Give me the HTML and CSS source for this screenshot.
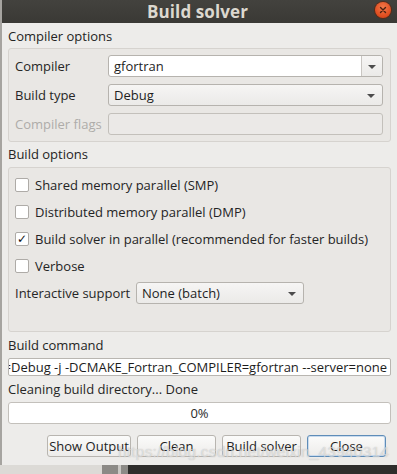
FILE: index.html
```html
<!DOCTYPE html>
<html>
<head>
<meta charset="utf-8">
<link rel="stylesheet" href="styles.css">
</head>
<body>
<div class="window">
  <div class="titlebar">
    <span class="title">Build solver</span>
    <span class="close-btn">
      <svg width="16" height="16" viewBox="0 0 16 16"><path d="M5.5 5.5 L10.5 10.5 M10.5 5.5 L5.5 10.5" stroke="#4a2010" stroke-width="1.4" stroke-linecap="round"/></svg>
    </span>
  </div>
  <div class="content">
    <div class="section-label first">Compiler options</div>
    <div class="frame compiler-frame">
      <div class="form-row">
        <span class="row-label">Compiler</span>
        <div class="combo editable">
          <span class="combo-text">gfortran</span>
          <span class="combo-btn"><span class="arrow"></span></span>
        </div>
      </div>
      <div class="form-row">
        <span class="row-label">Build type</span>
        <div class="combo">
          <span class="combo-text">Debug</span>
          <span class="combo-arrow"><span class="arrow"></span></span>
        </div>
      </div>
      <div class="form-row">
        <span class="row-label disabled">Compiler flags</span>
        <div class="field disabled-field"></div>
      </div>
    </div>

    <div class="section-label">Build options</div>
    <div class="frame options-frame">
      <div class="check-row"><span class="checkbox"></span><span>Shared memory parallel (SMP)</span></div>
      <div class="check-row"><span class="checkbox"></span><span>Distributed memory parallel (DMP)</span></div>
      <div class="check-row"><span class="checkbox checked">✓</span><span>Build solver in parallel (recommended for faster builds)</span></div>
      <div class="check-row"><span class="checkbox"></span><span>Verbose</span></div>
      <div class="interactive-row">
        <span class="interactive-label">Interactive support</span>
        <div class="combo small-combo">
          <span class="combo-text">None (batch)</span>
          <span class="combo-arrow"><span class="arrow"></span></span>
        </div>
      </div>
    </div>

    <div class="section-label cmd-label">Build command</div>
    <div class="cmd-field"><span class="cmd-text">cmake -DCMAKE_BUILD_TYPE=Debug -j -DCMAKE_Fortran_COMPILER=gfortran --server=none</span></div>
    <div class="status">Cleaning build directory... Done</div>
    <div class="progress">0%</div>
    <div class="buttons">
      <span class="btn">Show Output</span>
      <span class="btn">Clean</span>
      <span class="btn">Build solver</span>
      <span class="btn focused">Close</span>
    </div>
    <div class="watermark">https://blog.csdn.net/weixin_43940314</div>
  </div>
</div>
<div class="bottom-strip">
  <span class="strip-light"></span>
  <span class="strip-mid"></span>
  <span class="strip-line"></span>
  <span class="strip-mid2"></span>
</div>
</body>
</html>
```
FILE: styles.css
```css
html, body {
  margin: 0;
  padding: 0;
}
body {
  width: 397px;
  height: 474px;
  overflow: hidden;
  background: #2e2d2b;
  font-family: "Open Sans", "Noto Sans", sans-serif;
  font-size: 12.5px;
  color: #262626;
}
.window {
  position: relative;
  height: 465px;
  background: #edecea;
  border-left: 2px solid #a6a4a0;
  box-sizing: border-box;
}
.titlebar {
  height: 23px;
  background: linear-gradient(#43423e, #3a3935);
  display: flex;
  align-items: center;
  justify-content: center;
  position: relative;
}
.title {
  color: #dcd8cf;
  font-weight: bold;
  font-size: 17px;
  letter-spacing: 0.1px;
  margin-left: -4px;
  margin-top: -1px;
}
.close-btn {
  position: absolute;
  left: 373px;
  top: 2px;
  width: 16px;
  height: 16px;
  border-radius: 50%;
  background: radial-gradient(circle at 50% 35%, #f27a4c, #df4a1c 70%, #c63f14);
  box-shadow: 0 0 0 1px #5a2a17;
  display: flex;
}
.content {
  padding: 0 6px 0 6px;
  display: flex;
  flex-direction: column;
}
.section-label {
  height: 25px;
  line-height: 25px;
  color: #242424;
  font-size: 13px;
}
.section-label.first {
  height: 25px;
  line-height: 27px;
}
.frame {
  border: 1px solid #d6d3cf;
  border-radius: 3px;
  background: #e9e7e4;
  box-sizing: border-box;
}
.compiler-frame {
  height: 94px;
  padding: 6px 7px 0 6px;
  display: flex;
  flex-direction: column;
  gap: 7px;
}
.form-row {
  display: flex;
  align-items: center;
  height: 22px;
}
.row-label {
  width: 93px;
  flex: none;
  font-size: 13px;
}
.row-label.disabled {
  color: #aeaca9;
}
.combo {
  flex: 1;
  height: 22px;
  box-sizing: border-box;
  border: 1px solid #b6b3ae;
  border-radius: 3px;
  background: linear-gradient(#f6f5f4, #ebeae8);
  display: flex;
  align-items: center;
}
.combo.editable {
  background: #ffffff;
}
.combo-text {
  flex: 1;
  padding-left: 5px;
  font-size: 13px;
  color: #1e1e1e;
}
.combo-btn {
  width: 20px;
  height: 100%;
  border-left: 1px solid #c9c6c2;
  background: linear-gradient(#f6f5f4, #ebeae8);
  border-radius: 0 3px 3px 0;
  display: flex;
  align-items: center;
  justify-content: center;
}
.combo-arrow {
  width: 22px;
  display: flex;
  align-items: center;
  justify-content: center;
}
.arrow {
  width: 0;
  height: 0;
  border-left: 4px solid transparent;
  border-right: 4px solid transparent;
  border-top: 4px solid #4c4c4c;
  margin-top: 1px;
}
.field {
  flex: 1;
  height: 22px;
  box-sizing: border-box;
  border: 1px solid #c3c0bb;
  border-radius: 3px;
}
.disabled-field {
  background: #ebe9e7;
}
.options-frame {
  height: 165px;
  padding: 7px 7px 0 6px;
  display: flex;
  flex-direction: column;
  gap: 7px;
}
.check-row {
  height: 20px;
  display: flex;
  align-items: center;
  gap: 6px;
  font-size: 13px;
  color: #242424;
}
.checkbox {
  width: 14px;
  height: 14px;
  box-sizing: border-box;
  border: 1px solid #aeaba7;
  border-radius: 2px;
  background: #ffffff;
  display: flex;
  align-items: center;
  justify-content: center;
  font-family: "DejaVu Sans", sans-serif;
  font-size: 12px;
  line-height: 1;
  color: #111111;
  flex: none;
}
.interactive-row {
  height: 22px;
  display: flex;
  align-items: center;
  margin-top: -1px;
}
.interactive-label {
  width: 121px;
  flex: none;
  font-size: 13px;
}
.small-combo {
  flex: none;
  width: 168px;
}
.cmd-label {
  height: 26px;
  line-height: 27px;
}
.cmd-field {
  height: 18px;
  box-sizing: border-box;
  border: 1px solid #b9b6b1;
  border-radius: 2px;
  background: #ffffff;
  display: flex;
  justify-content: flex-end;
  align-items: center;
  overflow: hidden;
  padding-right: 3px;
}
.cmd-text {
  white-space: nowrap;
  font-size: 13px;
  color: #1c1c1c;
  flex: none;
}
.status {
  height: 26px;
  line-height: 26px;
  font-size: 13px;
}
.progress {
  height: 22px;
  box-sizing: border-box;
  border: 1px solid #c3c0bb;
  border-radius: 3px;
  background: #ffffff;
  display: flex;
  align-items: center;
  justify-content: center;
  font-size: 13px;
  color: #2a2a2a;
}
.buttons {
  display: flex;
  justify-content: flex-end;
  gap: 6px;
  margin-top: 11px;
  padding-right: 5px;
}
.btn {
  height: 22px;
  box-sizing: border-box;
  border: 1px solid #b8b5b0;
  border-radius: 3px;
  background: linear-gradient(#fbfbfa, #edecea);
  display: flex;
  align-items: center;
  justify-content: center;
  font-size: 13px;
  color: #1e1e1e;
  width: 79px;
}
.btn:first-child {
  width: 84px;
}
.btn.focused {
  border-color: #5f8db8;
  box-shadow: inset 0 0 0 1px #c9dbee;
}
.watermark {
  position: absolute;
  left: 116px;
  top: 443px;
  font-family: "Liberation Sans", sans-serif;
  font-size: 15.5px;
  color: rgba(255, 255, 255, 0.5);
  text-shadow: 0 0 1px rgba(120, 120, 120, 0.5);
  white-space: nowrap;
  letter-spacing: 0.2px;
  pointer-events: none;
}
.bottom-strip {
  height: 9px;
  display: flex;
}
.strip-light {
  width: 102px;
  background: #dcdad6;
}
.strip-mid {
  width: 16px;
  background: #8c8a86;
}
.strip-line {
  width: 3px;
  background: #c9c7c3;
}
.strip-mid2 {
  width: 7px;
  background: #8c8a86;
}
```
